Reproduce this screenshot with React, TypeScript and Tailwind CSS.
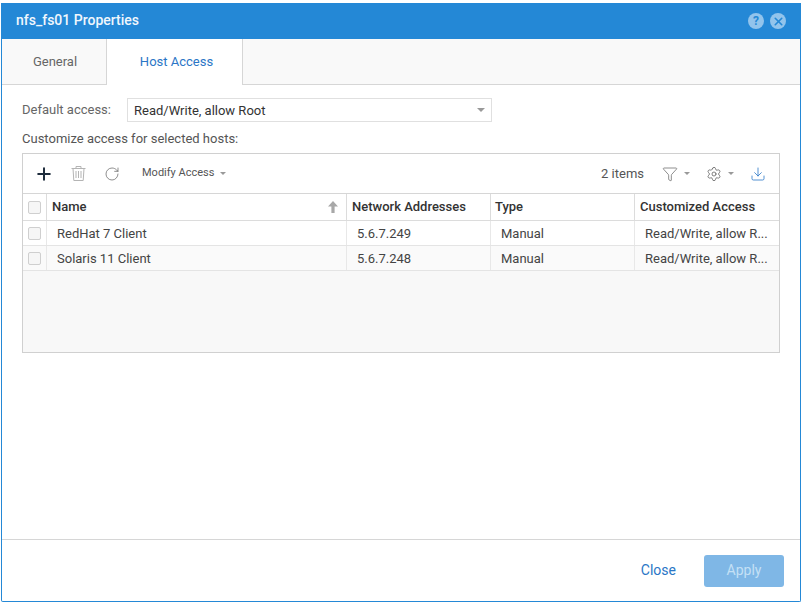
import { Download, Filter, Plus, RotateCw, Settings, X } from "lucide-react";

const hosts = [
  { name: "RedHat 7 Client", addr: "5.6.7.249", type: "Manual", access: "Read/Write, allow R..." },
  { name: "Solaris 11 Client", addr: "5.6.7.248", type: "Manual", access: "Read/Write, allow R..." },
];

function Caret({ className }: { className: string }) {
  return <span className={`inline-block w-0 h-0 border-x-[3px] border-x-transparent border-t-[3px] ${className}`} />;
}

function Check() {
  return <span className="block w-[13px] h-[13px] rounded-[2px] border border-[#cfcfcf] bg-[#f6f6f6]" />;
}

function TrashIcon() {
  return (
    <svg width="15" height="15" viewBox="0 0 15 15" fill="none" stroke="#b4b4b4" strokeWidth="1" className="ml-[17px]">
      <path d="M0.5 2.5h14M5 2.5V0.5h5v2M2 2.5l0.8 12h9.4l0.8-12" />
      <path d="M5 5v7M7.5 5v7M10 5v7" />
    </svg>
  );
}

function SortArrow() {
  return (
    <svg width="10" height="12" viewBox="0 0 10 12" fill="#a8a8a8">
      <path d="M5 0l5 5.5H6.6V12H3.4V5.5H0z" />
    </svg>
  );
}

export default function App() {
  return (
    <div className="w-[802px] h-[603px] bg-white font-['Roboto',sans-serif] text-[13px] text-[#444] pt-[3px] overflow-hidden">
      <div className="h-[599px] flex flex-col border-x border-b border-[#2488d6] mx-px rounded-b-[2px]">
        <div className="h-9 shrink-0 bg-[#2488d6] flex items-center justify-between pl-[14px] pr-[14px]">
          <span className="text-[14px] font-medium text-[#f0f7fd] pb-[2px]">nfs_fs01 Properties</span>
          <div className="flex items-center gap-[6px]">
            <span className="w-4 h-4 rounded-full bg-[#92c4ec] flex items-center justify-center text-[12px] font-bold text-[#2488d6]">?</span>
            <span className="w-4 h-4 rounded-full bg-[#92c4ec] flex items-center justify-center text-[#2488d6]">
              <X size={13} strokeWidth={3} />
            </span>
          </div>
        </div>

        <div className="h-[46px] shrink-0 flex bg-[#f9f9f9]">
          <div className="w-[105px] border-r border-b border-[#d6d6d6] flex items-center justify-center pl-[2px] text-[#666]">General</div>
          <div className="w-[136px] bg-white border-r border-[#d6d6d6] flex items-center justify-center pl-[4px] text-[#2a76c6]">Host Access</div>
          <div className="flex-1 border-b border-[#d6d6d6]" />
        </div>

        <div className="flex-1 px-5 pt-[13px]">
          <div className="flex items-center h-6">
            <span className="w-[105px] text-[#666]">Default access:</span>
            <div className="w-[365px] h-6 border border-[#e0e0e0] flex items-center justify-between pl-[6px] pr-[6px] text-[#333]">
              <span className="pt-[1px]">Read/Write, allow Root</span>
              <Caret className="border-x-[4px] border-t-[4px] border-t-[#999]" />
            </div>
          </div>
          <div className="mt-[9px] h-[15px] leading-[15px] text-[#555]">Customize access for selected hosts:</div>

          <div className="mt-[7px] w-[758px] h-[200px] border border-[#d0d0d0] bg-[#f8f8f8] flex flex-col">
            <div className="h-[40px] shrink-0 bg-white border-b border-[#d6d6d6] flex items-center pl-3 pr-[13px]">
              <Plus size={20} strokeWidth={2.4} className="-ml-[1px] text-[#1f2d3d]" />
              <TrashIcon />
              <RotateCw size={16} strokeWidth={1.1} className="ml-[18px] text-[#666]" />
              <span className="ml-[22px] text-[11px] text-[#555]">Modify Access</span>
              <Caret className="ml-[6px] border-t-[#999]" />
              <span className="ml-auto text-[#555]">2 items</span>
              <Filter size={16} strokeWidth={1} className="ml-[18px] text-[#555]" />
              <Caret className="ml-[6px] border-t-[#999]" />
              <Settings size={16} strokeWidth={1.1} className="ml-[16px] text-[#555]" />
              <Caret className="ml-[6px] border-t-[#999]" />
              <Download size={16} strokeWidth={1.2} className="ml-[16px] text-[#2a76c6]" />
            </div>

            <div className="h-[27px] shrink-0 bg-white border-b border-[#dcdcdc] flex items-stretch font-medium text-[#333]">
              <div className="w-[24px] border-r border-[#dcdcdc] flex items-center justify-center"><Check /></div>
              <div className="w-[300px] border-r border-[#dcdcdc] flex items-center justify-between pl-[5px] pr-[8px]">
                <span>Name</span>
                <SortArrow />
              </div>
              <div className="w-[144px] border-r border-[#dcdcdc] flex items-center pl-[5px]">Network Addresses</div>
              <div className="w-[144px] border-r border-[#dcdcdc] flex items-center pl-1">Type</div>
              <div className="flex-1 flex items-center pl-[5px]">Customized Access</div>
            </div>

            {hosts.map((h, i) => (
              <div key={h.name} className={`h-[25px] shrink-0 border-b border-[#e4e4e4] flex items-stretch ${i === 0 ? "bg-white" : "bg-[#fafafa]"}`}>
                <div className="w-[24px] border-r border-[#e8e8e8] flex items-center justify-center"><Check /></div>
                <div className="w-[300px] border-r border-[#e8e8e8] flex items-center pl-[10px] pt-[1px]">{h.name}</div>
                <div className="w-[144px] border-r border-[#e8e8e8] flex items-center pl-[10px] pt-[1px]">{h.addr}</div>
                <div className="w-[144px] border-r border-[#e8e8e8] flex items-center pl-[10px] pt-[1px]">{h.type}</div>
                <div className="flex-1 flex items-center pl-[10px] pt-[1px]">{h.access}</div>
              </div>
            ))}
          </div>
        </div>

        <div className="h-[62px] shrink-0 border-t border-[#d6d6d6] flex items-center justify-end pr-[16px]">
          <span className="text-[14px] text-[#2a76c6] mr-[28px]">Close</span>
          <span className="w-[80px] h-8 rounded-[3px] bg-[#7fb7e6] flex items-center justify-center text-[14px] text-[#c4e0f5]">Apply</span>
        </div>
      </div>
    </div>
  );
}
